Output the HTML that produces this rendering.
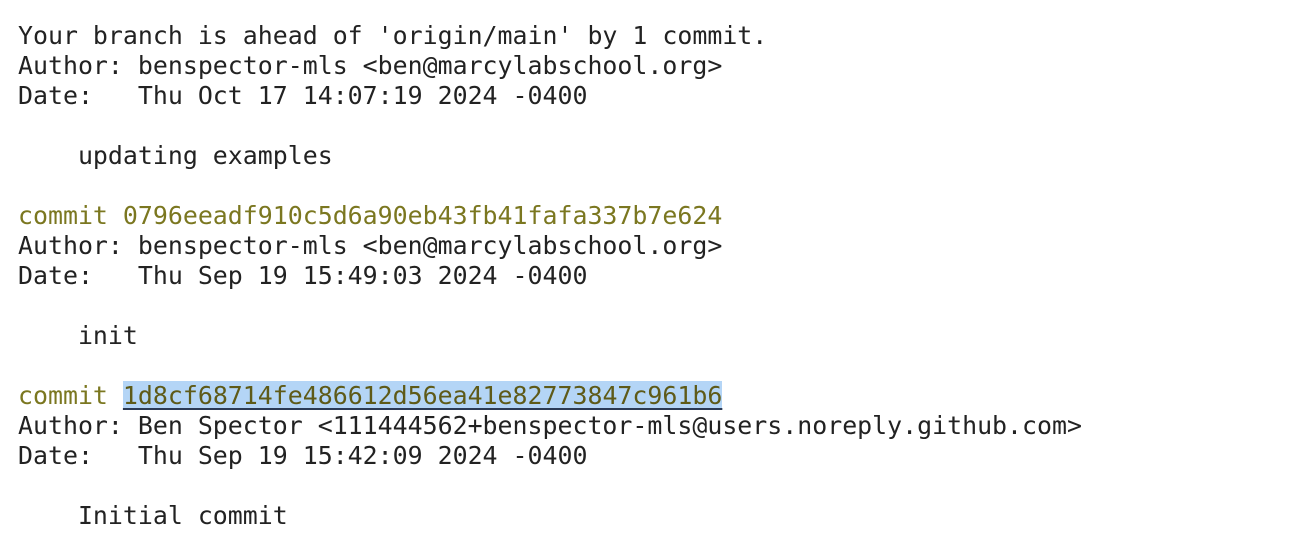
<!DOCTYPE html>
<html><head><style>
body{margin:0;background:#fff;width:1310px;height:538px;overflow:hidden}
pre{margin:0;position:absolute;left:18px;top:21px;font-family:"DejaVu Sans Mono","Liberation Mono",monospace;font-size:24.9px;line-height:30px;color:#222}
.y{color:#7b7720}
.h{background:#b4d5f6;color:#5e5a18;text-decoration:underline;text-decoration-color:#2b3a55;text-underline-offset:4px}
</style></head><body><pre>Your branch is ahead of 'origin/main' by 1 commit.
Author: benspector-mls &lt;ben@marcylabschool.org&gt;
Date:   Thu Oct 17 14:07:19 2024 -0400

    updating examples

<span class="y">commit 0796eeadf910c5d6a90eb43fb41fafa337b7e624</span>
Author: benspector-mls &lt;ben@marcylabschool.org&gt;
Date:   Thu Sep 19 15:49:03 2024 -0400

    init

<span class="y">commit </span><span class="h">1d8cf68714fe486612d56ea41e82773847c961b6</span>
Author: Ben Spector &lt;111444562+benspector-mls@users.noreply.github.com&gt;
Date:   Thu Sep 19 15:42:09 2024 -0400

    Initial commit</pre></body></html>
